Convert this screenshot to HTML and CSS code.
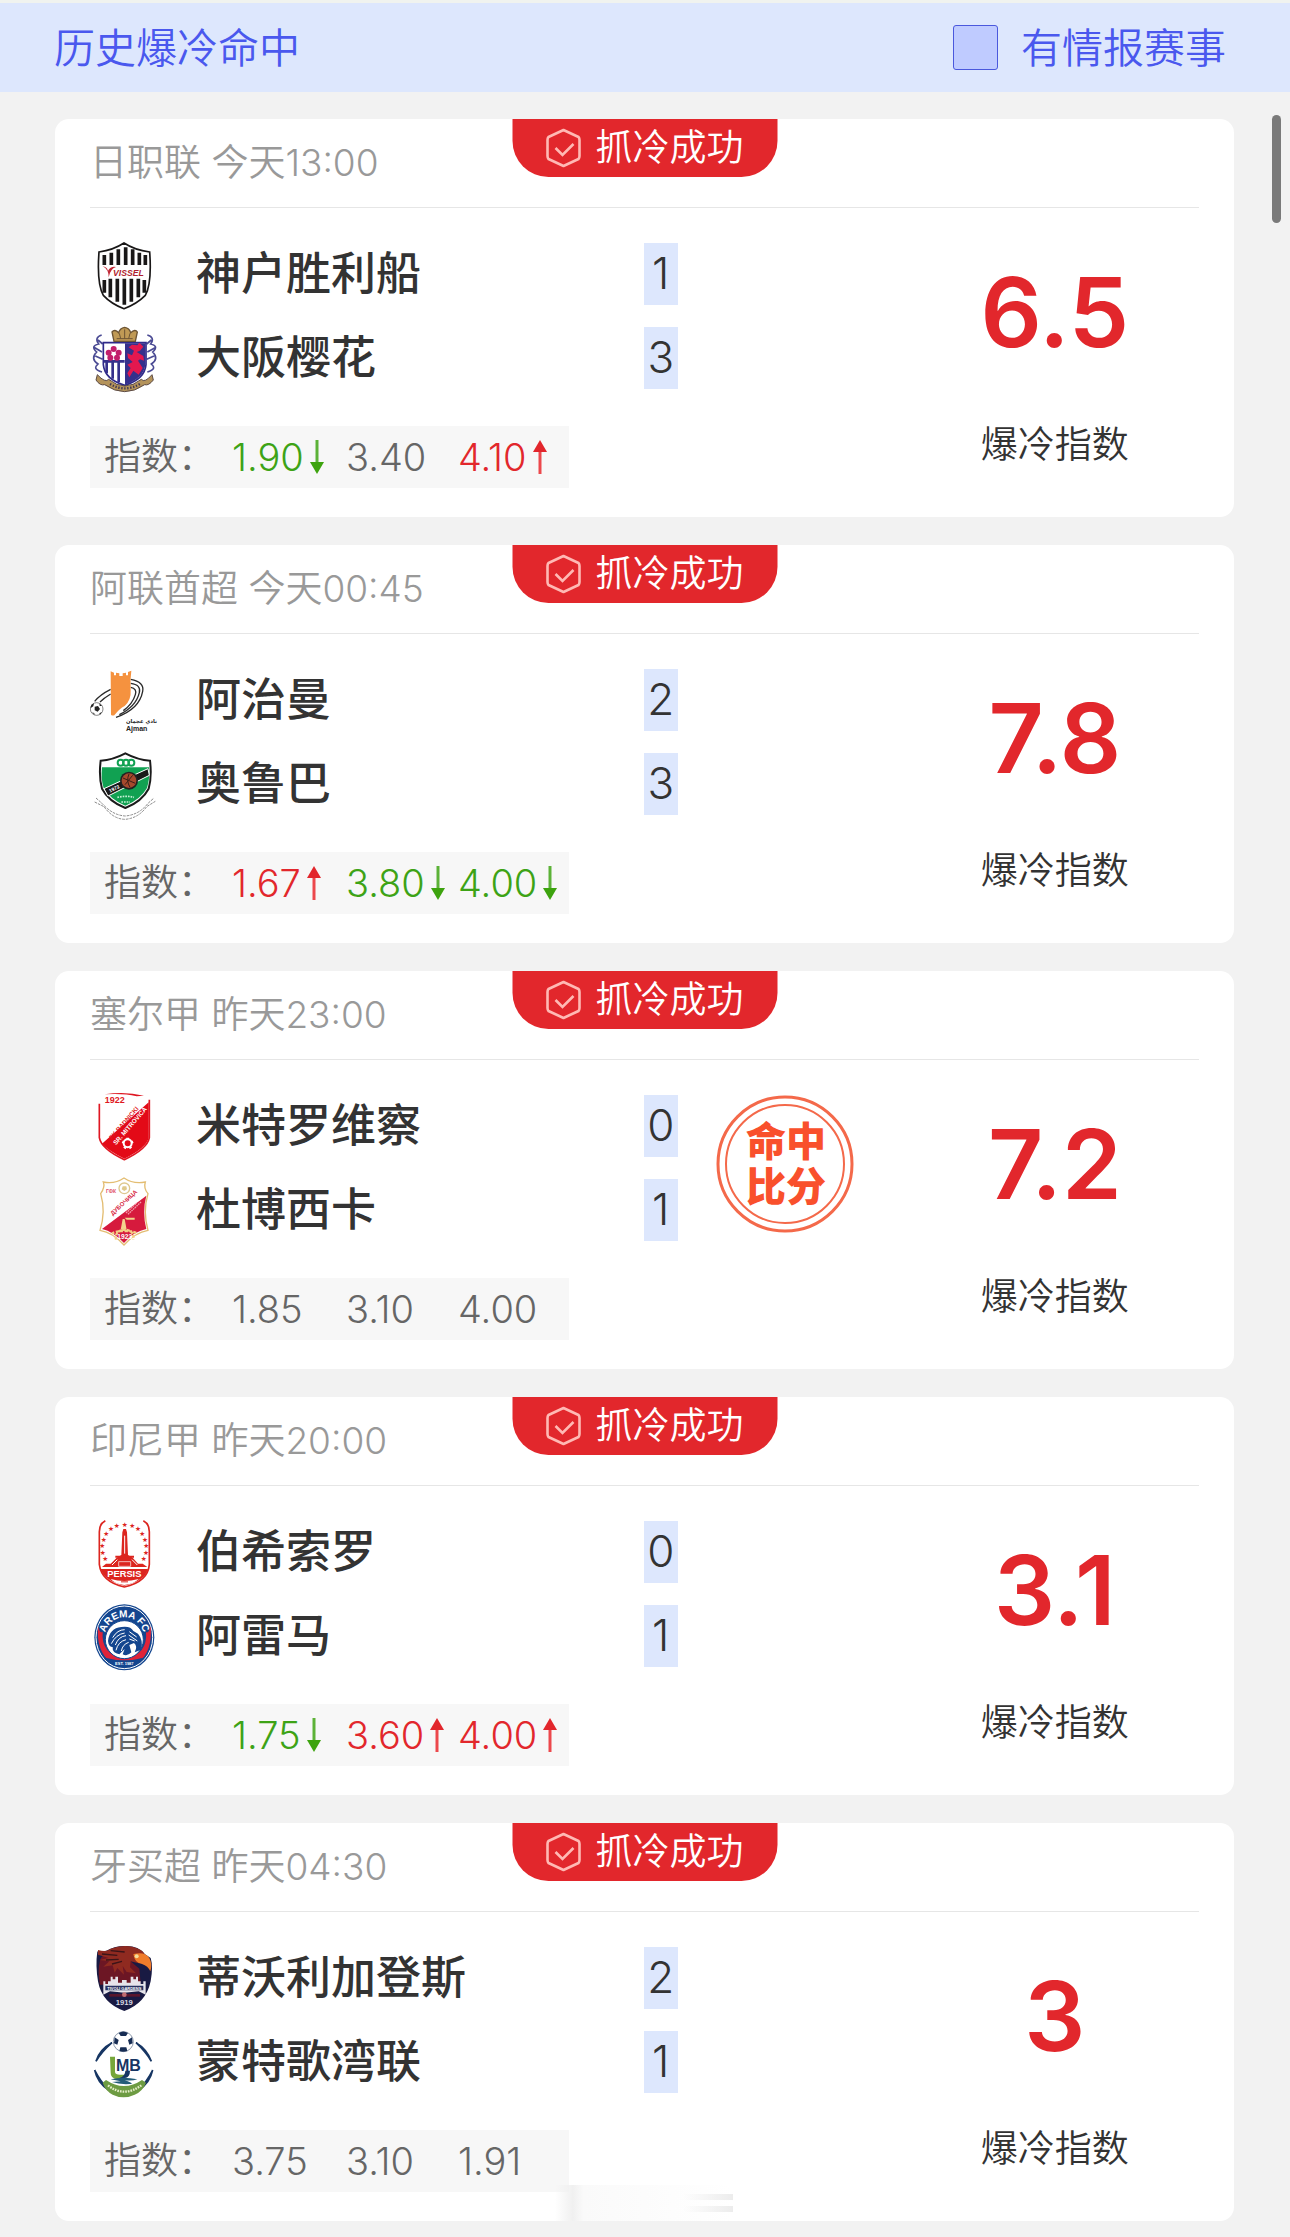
FILE: index.html
```html
<!DOCTYPE html>
<html lang="zh-CN">
<head>
    <meta charset="UTF-8">
    <meta name="viewport" content="width=device-width, initial-scale=1.0">
    <title>历史爆冷命中</title>
    <link rel="stylesheet" href="styles.css">
</head>
<body>
    <!-- 公用图标 -->
    <svg class="sprite" aria-hidden="true">
        <symbol id="hexCheck" viewBox="0 0 36 40">
            <path d="M18 2 33 9Q34 10 34 12V28Q34 30 33 31L18 38 3 31Q2 30 2 28V12Q2 10 3 9Z" fill="none" stroke="#ffb9b4" stroke-width="2.6" stroke-linejoin="round"/>
            <path d="M10 20 17 27 28 16" fill="none" stroke="#ffb9b4" stroke-width="2.6"/>
        </symbol>
        <symbol id="arrowUp" viewBox="0 0 14 34">
            <path d="M7 10V34" stroke="#ec484c" stroke-width="3"/>
            <path d="M7 0 14 12H0Z" fill="#e2262c"/>
        </symbol>
        <symbol id="arrowDown" viewBox="0 0 14 34">
            <path d="M7 0V24" stroke="#5cb238" stroke-width="3"/>
            <path d="M7 34 0 22H14Z" fill="#3da30e"/>
        </symbol>
    </svg>

    <header class="top-bar">
        <h1>历史爆冷命中</h1>
        <label class="filter" for="hasInfo">
            <input type="checkbox" id="hasInfo">
            有情报赛事
        </label>
    </header>

    <main class="match-list">
        <article class="card">
            <div class="card-header">日职联 今天13:00</div>
            <div class="badge"><svg><use href="#hexCheck"/></svg>抓冷成功</div>
            <div class="card-body">
                <div class="info">
                    <div class="team">
                        <svg class="logo" viewBox="30 24 204 216">
                            <path d="M57 66Q100 60 132 39Q164 60 209 66Q216 160 196 196Q170 222 132 236Q94 222 70 196Q50 160 57 66Z" fill="#fff" stroke="#191717" stroke-width="5"/>
                            <path d="M73 75V105M94 68V105M115 58V105M137 52V105M158 58V105M178 68V105M196 75V105M73 150V188M91 146V202M112 146V215M133 146V224M154 146V215M175 146V202M193 150V188" stroke="#191717" stroke-width="11"/>
                            <path d="M68 109Q86 118 86 142Q91 116 108 111Q92 108 84 122Q80 110 68 109Z" fill="#c22a38"/>
                            <text x="99" y="139" class="t-vissel">VISSEL</text>
                        </svg>
                        <span class="name">神户胜利船</span>
                        <span class="goals">1</span>
                    </div>
                    <div class="team">
                        <svg class="logo" viewBox="30 276 204 216">
                            <path d="M65 315Q42 322 56 342Q30 348 50 366Q30 386 54 402Q36 418 66 426M202 315Q226 322 212 342Q238 348 218 366Q238 386 214 402Q232 418 202 426M54 330 68 342M214 330 200 342M42 352 66 366M228 352 202 366M46 378 68 388M222 378 200 388" fill="none" stroke="#4b4b94" stroke-width="5"/>
                            <path d="M70 338H198V404Q194 448 134 466Q74 448 70 404Z" fill="#fff" stroke="#2f2a8a" stroke-width="5"/>
                            <path d="M135 340H196V404Q192 444 135 464Z" fill="#35308c"/>
                            <path d="M80 398V430M98 398V446M116 398V456M72 394H134" stroke="#35308c" stroke-width="8"/>
                            <g fill="#c21f6b"><circle cx="101" cy="357" r="9"/><circle cx="86" cy="368" r="9"/><circle cx="91" cy="383" r="9"/><circle cx="111" cy="383" r="9"/><circle cx="116" cy="368" r="9"/></g>
                            <circle cx="101" cy="371" r="4" fill="#fff"/>
                            <path d="M146 352 156 344 172 346 178 338 190 350 180 362 170 366 190 378 192 392 180 388 174 392 188 414 176 434 160 422 148 442 142 430 152 414 142 404 158 396 144 384 142 370 156 376 162 362Z" fill="#e3184f"/>
                            <path d="M102 334 96 306Q104 296 116 308Q120 294 134 292Q148 294 152 308Q166 296 172 306L166 334Z" fill="#c09a55" stroke="#6c5434" stroke-width="4"/>
                            <path d="M110 326H158M118 310 122 326M150 310 146 326M134 298V326" stroke="#6c5434" stroke-width="3"/>
                            <path d="M52 434Q76 460 86 448Q134 488 184 448Q194 460 216 434L220 450Q206 468 194 464Q134 506 74 464Q60 468 48 450Z" fill="#b4935a" stroke="#5b4a45" stroke-width="3"/>
                            <path d="M90 462Q134 488 180 462" fill="none" stroke="#3d3350" stroke-width="7" stroke-dasharray="4 5"/>
                        </svg>
                        <span class="name">大阪樱花</span>
                        <span class="goals">3</span>
                    </div>
                    <div class="odds">
                        <span class="odds-label">指数：</span>
                        <span class="down">1.90<svg><use href="#arrowDown"/></svg></span>
                        <span>3.40</span>
                        <span class="up">4.10<svg><use href="#arrowUp"/></svg></span>
                    </div>
                </div>
                <div class="rating">
                    <strong>6.5</strong>
                    <span>爆冷指数</span>
                </div>
            </div>
        </article>

        <article class="card">
            <div class="card-header">阿联酋超 今天00:45</div>
            <div class="badge"><svg><use href="#hexCheck"/></svg>抓冷成功</div>
            <div class="card-body">
                <div class="info">
                    <div class="team">
                        <svg class="logo" viewBox="30 12 204 216">
                            <path d="M152 58Q194 66 188 94Q178 148 108 172M152 70Q184 74 178 98Q168 140 118 164M152 82Q172 86 166 104Q158 132 130 152M92 88Q60 104 44 124M92 102Q72 114 60 126" fill="none" stroke="#2b2b2b" stroke-width="4"/>
                            <path d="M92 34 102 38V46H108V38L118 40V48H128V40L138 38V46H144V36L154 32Q150 60 152 90Q154 120 134 138Q118 146 103 166Q96 168 93 164Z" fill="#f5923f"/>
                            <circle cx="50" cy="147" r="19" fill="#fff" stroke="#444" stroke-width="2"/>
                            <path d="M44 140 54 138 60 147 53 155 44 151ZM34 134 42 130 40 139 32 144ZM58 130 66 138 59 138ZM36 156 43 160 44 165ZM58 160 66 156 60 164Z" fill="#222"/>
                            <text x="138" y="190" class="t-arabic">نادي عجمان</text>
                            <text x="138" y="212" class="t-ajman">Ajman</text>
                        </svg>
                        <span class="name">阿治曼</span>
                        <span class="goals">2</span>
                    </div>
                    <div class="team">
                        <svg class="logo" viewBox="30 264 204 216">
                            <path d="M62 302Q98 300 136 280Q174 300 210 302Q216 350 206 386Q186 424 136 444Q86 424 66 386Q56 350 62 302Z" fill="#fff" stroke="#1b1b1b" stroke-width="6"/>
                            <path d="M66 322H207Q210 358 201 384Q182 418 136 437Q90 418 71 384Q62 358 66 322Z" fill="#11a152"/>
                            <path d="M72 386 204 326 208 346 84 408Z" fill="#191919" stroke="#fff" stroke-width="3"/>
                            <circle cx="147" cy="362" r="27" fill="#222"/>
                            <circle cx="147" cy="362" r="22" fill="#a7492d"/>
                            <path d="M129 354 166 370M135 374 158 346M147 342Q138 362 150 382" stroke="#3c1d16" stroke-width="3" fill="none"/>
                            <g fill="none" stroke="#11a152" stroke-width="6"><circle cx="122" cy="308" r="9"/><circle cx="138" cy="308" r="9"/><circle cx="154" cy="308" r="9"/></g>
                            <path d="M112 412Q138 406 162 412M124 426H150" stroke="#c6f0d5" stroke-width="5" stroke-dasharray="5 3" fill="none"/>
                            <path d="M48 414 66 430Q98 466 136 468Q178 464 204 430L222 414M44 426 72 440Q100 478 136 478Q176 474 200 440L226 424" fill="none" stroke="#8b8b8b" stroke-width="3" stroke-dasharray="8 3"/>
                            <text x="90" y="398" class="t-year" transform="rotate(-26 90 398)">1972</text>
                        </svg>
                        <span class="name">奥鲁巴</span>
                        <span class="goals">3</span>
                    </div>
                    <div class="odds">
                        <span class="odds-label">指数：</span>
                        <span class="up">1.67<svg><use href="#arrowUp"/></svg></span>
                        <span class="down">3.80<svg><use href="#arrowDown"/></svg></span>
                        <span class="down">4.00<svg><use href="#arrowDown"/></svg></span>
                    </div>
                </div>
                <div class="rating">
                    <strong>7.8</strong>
                    <span>爆冷指数</span>
                </div>
            </div>
        </article>

        <article class="card">
            <div class="card-header">塞尔甲 昨天23:00</div>
            <div class="badge"><svg><use href="#hexCheck"/></svg>抓冷成功</div>
            <div class="card-body">
                <div class="info">
                    <div class="team">
                        <svg class="logo" viewBox="30 15 204 216">
                            <path d="M58 56V158Q64 192 133 224Q202 192 208 158V44" fill="none" stroke="#df1722" stroke-width="5"/>
                            <path d="M74 28Q134 18 192 32L170 34Q130 24 74 28Z" fill="#df1722"/>
                            <path d="M206 52V158Q200 188 133 221Q84 196 66 176Z" fill="#e30a17"/>
                            <text x="74" y="54" class="t-1922">1922</text>
                            <text x="96" y="165" class="t-radnicki" fill="#df1722" transform="rotate(-49 96 165)">FK RADNICKI</text>
                            <text x="108" y="181" class="t-radnicki" fill="#fff" transform="rotate(-49 108 181)">SR. MITROVICA</text>
                            <circle cx="143" cy="175" r="12" fill="none" stroke="#fff" stroke-width="6"/>
                            <path d="M143 158V163M127 170 131 172M133 190 136 186M153 190 150 186M159 170 155 172" stroke="#fff" stroke-width="8"/>
                        </svg>
                        <span class="name">米特罗维察</span>
                        <span class="goals">0</span>
                    </div>
                    <div class="team">
                        <svg class="logo" viewBox="30 267 204 216">
                            <path d="M132 279Q160 298 196 291Q190 310 204 326Q188 380 204 436Q166 442 132 480Q98 442 60 436Q78 380 62 326Q76 306 70 291Q104 298 132 279Z" fill="#fff" stroke="#e3bd72" stroke-width="4"/>
                            <path d="M199 332Q186 380 199 432Q164 438 132 474Q100 440 66 432Z" fill="#d61a3d"/>
                            <circle cx="133" cy="310" r="16" fill="#fff" stroke="#dec88f" stroke-width="4"/>
                            <path d="M128 304H139L141 313 133 318 125 313Z" fill="#dfc98c"/>
                            <text x="78" y="323" class="t-fk">ГФК</text>
                            <text x="98" y="392" class="t-dub" transform="rotate(-43 98 392)">ДУБОЧИЦА</text>
                            <path d="M138 384 170 354M144 388 184 350" stroke="#f39aa8" stroke-width="4" stroke-dasharray="5 2"/>
                            <path d="M122 434 128 402H134L140 434ZM134 398H164V404H140Z" fill="#f4d18d"/>
                            <path d="M96 446Q104 438 134 438Q164 438 172 446M108 464Q104 436 134 434Q164 436 160 464" fill="none" stroke="#f2ce84" stroke-width="7" stroke-dasharray="9 4"/>
                            <text x="112" y="462" class="t-1923">1923</text>
                        </svg>
                        <span class="name">杜博西卡</span>
                        <span class="goals">1</span>
                    </div>
                    <div class="odds">
                        <span class="odds-label">指数：</span>
                        <span>1.85</span>
                        <span>3.10</span>
                        <span>4.00</span>
                    </div>
                </div>
                <svg class="stamp" viewBox="0 0 138 138">
                    <circle cx="69" cy="69" r="67" fill="none" stroke="#f4694a" stroke-width="3"/>
                    <circle cx="69" cy="69" r="59" fill="none" stroke="#f4694a" stroke-width="2"/>
                    <text x="70" y="61" text-anchor="middle">命中</text>
                    <text x="70" y="106" text-anchor="middle">比分</text>
                </svg>
                <div class="rating">
                    <strong>7.2</strong>
                    <span>爆冷指数</span>
                </div>
            </div>
        </article>

        <article class="card">
            <div class="card-header">印尼甲 昨天20:00</div>
            <div class="badge"><svg><use href="#hexCheck"/></svg>抓冷成功</div>
            <div class="card-body">
                <div class="info">
                    <div class="team">
                        <svg class="logo" viewBox="30 15 204 216">
                            <path d="M76 29Q58 38 58 62V160Q64 212 133 228Q204 212 208 160V62Q208 38 190 29" fill="none" stroke="#dc251f" stroke-width="5"/>
                            <path d="M62 174H204Q194 210 133 224Q74 210 62 174Z" fill="#dc251f"/>
                            <path d="M66 168 78 158H92L110 140 124 132H144L158 140 174 158H188L202 168Z" fill="#dc251f"/>
                            <path d="M124 132 127 64 130 54H138L141 64 144 132ZM106 134H162V140H106Z" fill="#dc251f"/>
                            <path d="M134 74V128M112 146 96 162M156 146 172 162" stroke="#fff" stroke-width="3"/>
                            <path d="M116 152H152V166H116Z" fill="#dc251f" stroke="#fff" stroke-width="2"/>
                            <g class="stars">
                                <text x="76" y="150">★</text><text x="68" y="132">★</text><text x="67" y="112">★</text><text x="71" y="93">★</text><text x="79" y="75">★</text><text x="93" y="60">★</text><text x="110" y="51">★</text>
                                <text x="191" y="150">★</text><text x="198" y="132">★</text><text x="199" y="112">★</text><text x="195" y="93">★</text><text x="187" y="75">★</text><text x="174" y="60">★</text><text x="157" y="51">★</text><text x="134" y="48">★</text>
                            </g>
                            <text x="133" y="199" text-anchor="middle" class="t-persis">PERSIS</text>
                            <path d="M92 204Q132 216 176 204Q160 220 133 222Q106 220 92 204Z" fill="#fff"/>
                            <path d="M124 212H144" stroke="#dc251f" stroke-width="5" stroke-dasharray="4 2"/>
                        </svg>
                        <span class="name">伯希索罗</span>
                        <span class="goals">0</span>
                    </div>
                    <div class="team">
                        <svg class="logo" viewBox="30 267 204 216">
                            <defs><path id="aremaArc" d="M76 366A58 58 0 0 1 190 366"/></defs>
                            <ellipse cx="133" cy="379" rx="90" ry="99" fill="#14468f"/>
                            <ellipse cx="133" cy="379" rx="85" ry="94" fill="none" stroke="#fff" stroke-width="3"/>
                            <path d="M54 346Q48 420 92 454Q134 476 176 454Q218 420 212 346Q204 372 198 362Q204 430 134 444Q62 430 68 362Q60 370 54 346Z" fill="#df2339"/>
                            <path d="M84 452Q134 480 182 452L190 440Q134 456 76 440Z" fill="#14468f"/>
                            <circle cx="133" cy="386" r="57" fill="#fff" stroke="#14468f" stroke-width="3"/>
                            <path d="M84 390Q88 352 124 348Q152 344 160 360L174 368Q190 386 184 416L164 424Q174 406 162 396L148 402 154 424Q142 438 128 430L134 414 118 430Q96 426 98 408Q86 408 84 390Z" fill="#14468f"/>
                            <path d="M98 380Q112 356 134 356M94 398Q108 370 134 366M106 402Q116 376 138 374M108 418Q114 392 138 386M124 420Q128 400 146 394M148 362 170 378M146 372 172 390M148 384 164 390" fill="none" stroke="#fff" stroke-width="3"/>
                            <text class="t-arema"><textPath href="#aremaArc" startOffset="50%" text-anchor="middle">AREMA FC</textPath></text>
                            <text x="133" y="463" text-anchor="middle" class="t-est">EST. 1987</text>
                        </svg>
                        <span class="name">阿雷马</span>
                        <span class="goals">1</span>
                    </div>
                    <div class="odds">
                        <span class="odds-label">指数：</span>
                        <span class="down">1.75<svg><use href="#arrowDown"/></svg></span>
                        <span class="up">3.60<svg><use href="#arrowUp"/></svg></span>
                        <span class="up">4.00<svg><use href="#arrowUp"/></svg></span>
                    </div>
                </div>
                <div class="rating">
                    <strong>3.1</strong>
                    <span>爆冷指数</span>
                </div>
            </div>
        </article>

        <article class="card">
            <div class="card-header">牙买超 昨天04:30</div>
            <div class="badge"><svg><use href="#hexCheck"/></svg>抓冷成功</div>
            <div class="card-body">
                <div class="info">
                    <div class="team">
                        <svg class="logo" viewBox="30 18 204 216">
                            <path d="M52 46Q64 56 76 46Q106 28 140 30Q176 30 194 54L212 66Q220 92 212 136Q198 202 133 225Q66 202 54 136Q46 90 52 46Z" fill="#191a43"/>
                            <path d="M60 74Q66 48 104 56L150 74 178 98 182 142 60 146Q52 104 60 74Z" fill="#6c1624"/>
                            <path d="M54 42Q80 50 92 38Q142 20 182 42Q200 54 196 70L176 82 152 76 150 94 168 112 140 108 128 90 132 116 112 96 104 110 98 88 70 92 88 76 58 72 86 66 54 56Z" fill="#8f2a20"/>
                            <path d="M66 54 112 58M78 72 116 70M92 44 134 48M96 84 126 76" stroke="#3b1418" stroke-width="4"/>
                            <path d="M160 54Q196 46 208 66Q218 84 211 106Q204 90 186 84Q164 82 160 54Z" fill="#f07c2b"/>
                            <circle cx="170" cy="61" r="6" fill="#f5dd9c"/>
                            <path d="M70 176V136H76V144H84V136H92V122H98V130H106V122H114V140H126V132H140V140H152V122H160V130H168V122H174V136H182V144H190V136H197V176L176 166 133 170 90 166Z" fill="#e6e4ea"/>
                            <path d="M76 156H190" stroke="#26305f" stroke-width="14"/>
                            <text x="133" y="161" text-anchor="middle" class="t-tivoli">TIVOLI GARDENS</text>
                            <path d="M88 178H180" stroke="#59152c" stroke-width="8"/>
                            <circle cx="133" cy="176" r="7" fill="#bf6d72"/>
                            <text x="133" y="207" text-anchor="middle" class="t-1919">1919</text>
                        </svg>
                        <span class="name">蒂沃利加登斯</span>
                        <span class="goals">2</span>
                    </div>
                    <div class="team">
                        <svg class="logo" viewBox="30 270 204 216">
                            <circle cx="130" cy="317" r="30" fill="#fff" stroke="#8d99ac" stroke-width="3"/>
                            <path d="M116 291Q130 282 144 291L138 300H122ZM104 304 116 312 112 326 102 322ZM156 304 144 312 148 326 158 322ZM121 334H139L142 345Q130 350 118 345Z" fill="#172d54"/>
                            <path d="M96 320Q58 340 48 376Q64 348 96 320M168 320Q202 340 214 376Q198 348 168 320M44 402Q52 440 86 462Q60 434 44 402M218 402Q210 440 176 462Q202 434 218 402" fill="#173663" stroke="#173663" stroke-width="5"/>
                            <path d="M90 362H105V408Q106 416 120 416H136V430H114Q91 428 92 410Z" fill="#76a63a"/>
                            <text x="108" y="405" class="t-mb">MB</text>
                            <path d="M136 404H150Q150 424 134 426H118Q136 420 136 404Z" fill="#173663"/>
                            <path d="M92 430Q130 420 172 430Q154 436 134 432Q166 444 150 444Q118 446 96 438L122 436Z" fill="#245c78"/>
                            <path d="M68 440 78 432Q132 468 186 432L198 440Q188 466 164 476Q130 492 98 476Q76 464 68 440Z" fill="#6d9b42"/>
                            <path d="M84 448Q132 486 184 448" fill="none" stroke="#e5edc8" stroke-width="7" stroke-dasharray="5 3"/>
                        </svg>
                        <span class="name">蒙特歌湾联</span>
                        <span class="goals">1</span>
                    </div>
                    <div class="odds">
                        <span class="odds-label">指数：</span>
                        <span>3.75</span>
                        <span>3.10</span>
                        <span>1.91</span>
                    </div>
                </div>
                <div class="rating">
                    <strong>3</strong>
                    <span>爆冷指数</span>
                </div>
            </div>
            <div class="smudge"></div>
        </article>
    </main>
    <div class="scroll-thumb"></div>
</body>
</html>
```
FILE: styles.css
```css
* {
    box-sizing: border-box;
}
body {
    position: relative;
    margin: 0;
    background-color: #f2f2f2;
    color: #333;
    font-family: Inter, 'Noto Sans CJK SC', sans-serif;
    font-size: 37px;
    font-weight: 350;
    line-height: 52px;
}
.sprite {
    display: none;
}

/* 顶部 */
.top-bar {
    display: flex;
    justify-content: space-between;
    align-items: center;
    height: 92px;
    padding: 0 64px 0 54px;
    border-top: 3px solid #f0f3ef;
    background-color: #dde7fd;
    color: #4a58ee;
    font-size: 41px;
}
.top-bar h1 {
    margin: 0;
    font-size: 41px;
    font-weight: 350;
}
.filter {
    display: flex;
    align-items: center;
    gap: 23px;
    cursor: pointer;
}
.filter input {
    appearance: none;
    width: 45px;
    height: 45px;
    margin: 0;
    border: 1px solid #4a58dd;
    border-radius: 3px;
    background-color: #bfcbff;
}
.filter input:checked {
    background-color: #4a58ee;
}

/* 比赛卡片 */
.match-list {
    display: flex;
    flex-direction: column;
    gap: 28px;
    padding: 27px 56px 16px 55px;
}
.card {
    position: relative;
    padding: 0 35px 29px;
    border-radius: 14px;
    background-color: #fff;
}
.card-header {
    padding: 18px 0;
    border-bottom: 1px solid #e6e6e6;
    color: #999;
}
.badge {
    position: absolute;
    top: 0;
    left: 50%;
    display: flex;
    justify-content: center;
    align-items: center;
    gap: 14px;
    width: 265px;
    height: 58px;
    transform: translateX(-50%);
    border-radius: 0 0 36px 36px;
    background-color: #e2272c;
    color: #fff;
}
.badge svg {
    width: 36px;
    height: 40px;
}
.card-body {
    display: flex;
    padding-top: 35px;
}
.info {
    width: 53%;
}
.team {
    display: flex;
    align-items: center;
    height: 62px;
    margin-bottom: 22px;
}
.logo {
    flex: none;
    width: 68px;
    height: 72px;
    margin-right: 38px;
}
.name {
    flex: 1;
    font-size: 45px;
    font-weight: 500;
}
.goals {
    width: 34px;
    background-color: #dde7fd;
    font-size: 44px;
    line-height: 60px;
    padding-bottom: 2px;
    text-align: center;
}
.odds {
    display: grid;
    grid-template-columns: 128px 114px 112px 1fr;
    align-items: center;
    width: 479px;
    height: 62px;
    margin-top: 37px;
    padding-left: 14px;
    background-color: #f7f7f7;
    color: #666;
}
.odds span {
    display: flex;
    align-items: center;
    gap: 6px;
    font-size: 38px;
    white-space: nowrap;
}
.odds .odds-label {
    font-size: 37px;
}
.odds svg {
    width: 14px;
    height: 34px;
}
.odds .up {
    color: #e2272c;
}
.odds .down {
    color: #3da316;
}
.stamp {
    width: 138px;
    height: 138px;
    margin-left: 38px;
}
.stamp text {
    fill: #f9502c;
    font-size: 40px;
    font-weight: 900;
    font-style: oblique 6deg;
}
.rating {
    display: flex;
    flex-direction: column;
    align-items: center;
    gap: 38px;
    width: 26%;
    margin-left: auto;
}
.rating strong {
    color: #e2272c;
    font-size: 96px;
    font-weight: 600;
    line-height: 138px;
}

/* 队徽文字 */
.logo text {
    font-family: 'Liberation Sans', sans-serif;
    font-weight: 700;
}
.logo .t-vissel {
    fill: #b01d2e;
    font-size: 26px;
    font-style: italic;
}
.logo .t-arabic {
    fill: #222;
    font-family: 'DejaVu Sans', sans-serif;
    font-size: 16px;
}
.logo .t-ajman {
    fill: #222;
    font-size: 21px;
}
.logo .t-year {
    fill: #fff;
    font-size: 15px;
}
.logo .t-1922 {
    fill: #df1722;
    font-size: 27px;
}
.logo .t-radnicki {
    font-size: 19px;
}
.logo .t-fk {
    fill: #e0506a;
    font-size: 15px;
}
.logo .t-dub {
    fill: #d61a3d;
    font-size: 18px;
}
.logo .t-1923 {
    fill: #fff;
    font-size: 20px;
}
.logo .t-persis {
    fill: #fff;
    font-size: 28px;
}
.logo .stars text {
    fill: #dc251f;
    font-family: 'DejaVu Sans', sans-serif;
    font-size: 20px;
    text-anchor: middle;
}
.logo .t-arema {
    fill: #fff;
    font-size: 30px;
}
.logo .t-est {
    fill: #fff;
    font-size: 12px;
}
.logo .t-tivoli {
    fill: #fff;
    font-size: 12px;
}
.logo .t-1919 {
    fill: #d7d7e2;
    font-size: 23px;
}
.logo .t-mb {
    fill: #173663;
    font-size: 48px;
}

.smudge {
    position: absolute;
    bottom: 0;
    left: 500px;
    width: 178px;
    height: 36px;
    background:
        linear-gradient(90deg, transparent, #ececec) right 9px / 50px 6px no-repeat,
        linear-gradient(90deg, transparent, #ececec) right 21px / 50px 6px no-repeat,
        linear-gradient(90deg, transparent, #f0f0f0 10%, #fafafa 16%, transparent);
}
.scroll-thumb {
    position: absolute;
    top: 115px;
    right: 9px;
    width: 9px;
    height: 108px;
    border-radius: 5px;
    background-color: #7a7a7a;
}
```
